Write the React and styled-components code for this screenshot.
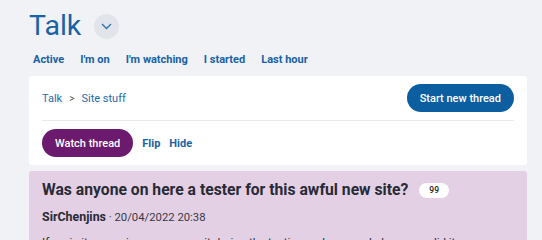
import React from 'react'
import styled, { createGlobalStyle } from 'styled-components'

const GlobalStyle = createGlobalStyle`
    body {
        margin: 0;
        background: #f0f2f5;
        font-family: Roboto, "Liberation Sans", sans-serif;
    }
`

const Page = styled.div`
    padding: 8px 15px 0 29px;
    overflow: hidden;
    height: 240px;
    box-sizing: border-box;
`

const TitleRow = styled.div`
    display: flex;
    align-items: center;
    gap: 13px;
`

const Title = styled.h1`
    margin: 0;
    font-size: 28.5px;
    font-weight: 400;
    color: #1862a5;
    line-height: 36px;
`

const ToggleButton = styled.button`
    width: 25px;
    height: 25px;
    border-radius: 50%;
    border: none;
    background: #e1e4ea;
    display: flex;
    align-items: center;
    justify-content: center;
    padding: 0;
    margin-top: 1px;
`

const Nav = styled.nav`
    display: flex;
    gap: 16px;
    padding: 8px 0 0 4px;
    height: 24px;
`

const NavLink = styled.a`
    font-size: 11px;
    font-weight: 700;
    color: #1862a5;
    text-decoration: none;
    line-height: 16px;
`

const Card = styled.div`
    background: #fff;
    border-radius: 3px;
    padding: 8px 13px 8px 13px;
`

const TopRow = styled.div`
    display: flex;
    justify-content: space-between;
    align-items: center;
    padding-bottom: 8px;
    border-bottom: 1px solid #e8eaee;
`

const Crumbs = styled.div`
    display: flex;
    align-items: center;
    gap: 7px;
    font-size: 11px;
    color: #1f6aa8;
`

const Sep = styled.span`
    color: #555;
    font-size: 10px;
`

const PillButton = styled.button`
    border: none;
    border-radius: 14px;
    height: 28px;
    padding: 0 13px;
    font-family: inherit;
    font-size: 11px;
    font-weight: 500;
    color: #fff;
    background: ${props => props.purple ? '#6b1a6d' : '#0b5e9f'};
`

const Actions = styled.div`
    display: flex;
    align-items: center;
    gap: 9px;
    padding-top: 8px;
`

const ActionLink = styled.a`
    font-size: 11px;
    font-weight: 700;
    color: #1862a5;
`

const Thread = styled.div`
    background: #e4d0e5;
    border-radius: 3px;
    margin-top: 6px;
    padding: 8px 13px;
`

const ThreadTitle = styled.div`
    display: flex;
    align-items: center;
    gap: 11px;
    font-size: 15.7px;
    font-weight: 700;
    color: #272b35;
    line-height: 22px;
`

const Badge = styled.span`
    background: #fff;
    border-radius: 8px;
    font-size: 8.5px;
    font-weight: 500;
    padding: 2px 10px;
    line-height: 11px;
    color: #222;
`

const Meta = styled.div`
    margin-top: 8px;
    font-size: 11.3px;
    color: #363a44;
    line-height: 15px;
    b {
        font-size: 12.4px;
        font-weight: 700;
        color: #272b35;
    }
`

const Body = styled.p`
    margin: 10px 0 0;
    font-size: 11.5px;
    color: #272b35;
    white-space: nowrap;
`

export default function App() {
    const nav = ['Active', "I'm on", "I'm watching", 'I started', 'Last hour']
    return (
        <>
            <GlobalStyle />
            <Page>
                <TitleRow>
                    <Title>Talk</Title>
                    <ToggleButton>
                        <svg width="11" height="7" viewBox="0 0 11 7">
                            <path d="M1 1 L5.5 5.5 L10 1" fill="none" stroke="#2a6fb0" strokeWidth="1.3" />
                        </svg>
                    </ToggleButton>
                </TitleRow>
                <Nav>
                    {nav.map(item => <NavLink key={item}>{item}</NavLink>)}
                </Nav>
                <Card>
                    <TopRow>
                        <Crumbs>
                            <span>Talk</span>
                            <Sep>&gt;</Sep>
                            <span>Site stuff</span>
                        </Crumbs>
                        <PillButton>Start new thread</PillButton>
                    </TopRow>
                    <Actions>
                        <PillButton purple>Watch thread</PillButton>
                        <ActionLink>Flip</ActionLink>
                        <ActionLink>Hide</ActionLink>
                    </Actions>
                </Card>
                <Thread>
                    <ThreadTitle>
                        Was anyone on here a tester for this awful new site?
                        <Badge>99</Badge>
                    </ThreadTitle>
                    <Meta><b>SirChenjins</b> · 20/04/2022 20:38</Meta>
                    <Body>If so, is it appearing as you saw it during the testing and approval phases, or did it</Body>
                </Thread>
            </Page>
        </>
    )
}
